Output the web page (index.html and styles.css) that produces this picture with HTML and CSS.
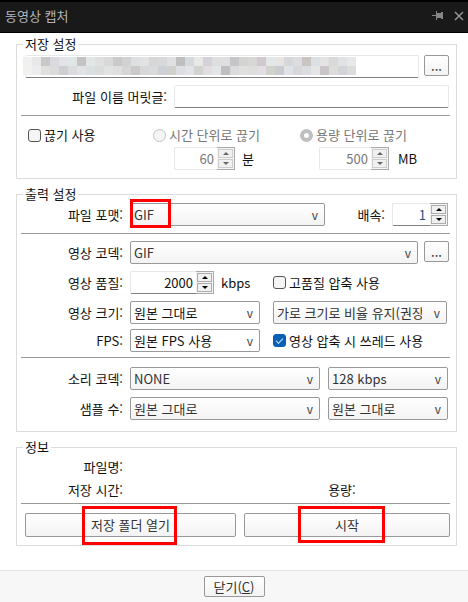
FILE: index.html
```html
<!DOCTYPE html>
<html lang="ko">
<head>
    <meta charset="UTF-8">
    <meta name="viewport" content="width=device-width, initial-scale=1.0">
    <title>동영상 캡처</title>
    <link rel="stylesheet" href="styles.css">
</head>
<body>

    <header class="title-bar">
        <h1>동영상 캡처</h1>
        <button type="button" class="title-button" aria-label="항상 위">
            <svg width="12" height="10" viewBox="0 0 12 10" shape-rendering="crispEdges">
                <path d="M0 4h5v1H0zM4 0h1v9H4zM5 2h5v5H5zM9 1h2v7H9z" fill="#858585"/>
            </svg>
        </button>
        <button type="button" class="title-button" aria-label="닫기">
            <svg width="10" height="10" viewBox="0 0 10 10">
                <path d="M1 1l8 8M9 1l-8 8" stroke="#9a9a9a" stroke-width="1.4" fill="none"/>
            </svg>
        </button>
    </header>

    <main class="content">
        <!-- Save settings -->
        <fieldset class="group group-save">
            <legend>저장 설정</legend>
            <div class="row row-path">
                <div class="path-box">
                    <input type="text" class="text-box" aria-label="저장 폴더">
                    <svg class="mosaic" width="333" height="18" viewBox="0 0 37 2" preserveAspectRatio="none" shape-rendering="crispEdges" aria-hidden="true"></svg>
                </div>
                <button type="button" class="btn btn-more">...</button>
            </div>
            <div class="row row-prefix">
                <label for="prefix">파일 이름 머릿글:</label>
                <input type="text" id="prefix" class="text-box">
            </div>
            <hr class="sep sep-split">
            <div class="split">
                <label class="check"><input type="checkbox">끊기 사용</label>
                <div class="split-option">
                    <label class="check muted"><input type="radio" name="split" disabled>시간 단위로 끊기</label>
                    <div class="amount">
                        <div class="spin spin-off">
                            <input type="number" value="60" aria-label="시간" disabled>
                            <div class="spin-buttons">
                                <button type="button" class="up" aria-label="증가" disabled></button>
                                <button type="button" class="down" aria-label="감소" disabled></button>
                            </div>
                        </div>
                        <span>분</span>
                    </div>
                </div>
                <div class="split-option split-size">
                    <label class="check muted"><input type="radio" name="split" checked disabled>용량 단위로 끊기</label>
                    <div class="amount">
                        <div class="spin spin-off">
                            <input type="number" value="500" aria-label="용량" disabled>
                            <div class="spin-buttons">
                                <button type="button" class="up" aria-label="증가" disabled></button>
                                <button type="button" class="down" aria-label="감소" disabled></button>
                            </div>
                        </div>
                        <span>MB</span>
                    </div>
                </div>
            </div>
        </fieldset>

        <!-- Output settings -->
        <fieldset class="group group-output">
            <legend>출력 설정</legend>
            <div class="row row-format">
                <label for="format">파일 포맷:</label>
                <div class="select marked">
                    <select id="format"><option>GIF</option></select>
                    <span class="mark mark-format"></span>
                </div>
                <label for="speed">배속:</label>
                <div class="spin spin-speed">
                    <input type="number" id="speed" value="1">
                    <div class="spin-buttons">
                        <button type="button" class="up" aria-label="증가"></button>
                        <button type="button" class="down" aria-label="감소"></button>
                    </div>
                </div>
            </div>
            <hr class="sep">
            <div class="row row-codec">
                <label for="codec">영상 코덱:</label>
                <div class="select"><select id="codec"><option>GIF</option></select></div>
                <button type="button" class="btn btn-more">...</button>
            </div>
            <div class="row row-video">
                <label for="quality">영상 품질:</label>
                <div class="amount">
                    <div class="spin">
                        <input type="number" id="quality" value="2000">
                        <div class="spin-buttons">
                            <button type="button" class="up" aria-label="증가"></button>
                            <button type="button" class="down" aria-label="감소"></button>
                        </div>
                    </div>
                    <span>kbps</span>
                </div>
                <label class="check"><input type="checkbox">고품질 압축 사용</label>
            </div>
            <div class="row row-video">
                <label for="size">영상 크기:</label>
                <div class="select select-white"><select id="size"><option>원본 그대로</option></select></div>
                <div class="select"><select aria-label="비율"><option>가로 크기로 비율 유지(권장)</option></select></div>
            </div>
            <div class="row row-video row-tight">
                <label for="fps">FPS:</label>
                <div class="select select-white"><select id="fps"><option>원본 FPS 사용</option></select></div>
                <label class="check"><input type="checkbox" checked>영상 압축 시 쓰레드 사용</label>
            </div>
            <hr class="sep sep-wide">
            <div class="row row-sound">
                <label for="sound">소리 코덱:</label>
                <div class="select"><select id="sound"><option>NONE</option></select></div>
                <div class="select"><select aria-label="소리 비트레이트"><option>128 kbps</option></select></div>
            </div>
            <div class="row row-sound">
                <label for="sample">샘플 수:</label>
                <div class="select"><select id="sample"><option>원본 그대로</option></select></div>
                <div class="select"><select aria-label="채널"><option>원본 그대로</option></select></div>
            </div>
        </fieldset>

        <!-- Info -->
        <fieldset class="group group-info">
            <legend>정보</legend>
            <div class="info"><span>파일명:</span></div>
            <div class="info"><span>저장 시간:</span><span>용량:</span></div>
            <hr class="sep sep-wide">
            <div class="actions">
                <button type="button" class="btn marked">저장 폴더 열기<span class="mark mark-open"></span></button>
                <button type="button" class="btn marked">시작<span class="mark mark-start"></span></button>
            </div>
        </fieldset>
    </main>

    <footer class="bottom-bar">
        <button type="button" class="btn btn-close">닫기(<u>C</u>)</button>
    </footer>

    <script src="mosaic.js"></script>
</body>
</html>
```
FILE: styles.css
```css
:root {
    --title-bg: #191919;
    --line: #dcdcdc;
    --edge: #999;
    --edge-light: #e8e8e8;
    --text: #111;
    --muted: #777;
    --mark: #f00;
}

* {
    box-sizing: border-box;
}

body {
    margin: 0;
    min-height: 100vh;
    display: flex;
    flex-direction: column;
    background: #fff;
    color: var(--text);
    font-family: "Noto Sans CJK KR", sans-serif;
    font-size: 13px;
    line-height: 16px;
}

button,
input,
select {
    margin: 0;
    font: inherit;
    color: inherit;
}

/* --- Title bar --- */
.title-bar {
    display: flex;
    align-items: center;
    gap: 10px;
    height: 33px;
    padding: 0 4px 2px 5px;
    background: var(--title-bg);
    border-top: 2px solid #000;
    border-bottom: 1px solid #000;
}

.title-bar h1 {
    flex: 1;
    margin: 0;
    font-size: 13px;
    font-weight: 400;
    color: #b4b4bc;
}

.title-button {
    display: flex;
    padding: 0;
    border: 0;
    background: none;
}

/* --- Groups --- */
.content {
    display: flex;
    flex-direction: column;
    gap: 7px;
    padding: 3px 11px 24px 16px;
}

.group {
    min-width: 0;
    margin: 0;
    padding: 0 6px 0 4px;
    border: 1px solid var(--line);
}

.group legend {
    margin-left: 2px;
    padding: 0 2px;
}

.group-save {
    padding-top: 3px;
    padding-bottom: 8px;
}

.group-output {
    padding-top: 1px;
    padding-bottom: 11px;
}

.group-info {
    padding-top: 4px;
    padding-bottom: 8px;
}

.sep {
    height: 1px;
    margin: 7px 0;
    border: 0;
    background: var(--edge);
}

.sep-split {
    margin-bottom: 11px;
}

.sep-wide {
    margin: 5px 0 9px;
}

/* --- Rows --- */
.row {
    display: grid;
    align-items: center;
    height: 23px;
}

.row + .row {
    margin-top: 7px;
}

.row + .row-tight {
    margin-top: 5px;
}

.row > label:not(.check) {
    padding-right: 7px;
    text-align: right;
}

.row-path {
    grid-template-columns: 1fr 25px;
    column-gap: 5px;
    padding: 0 1px 0 4px;
}

.row-prefix {
    grid-template-columns: 153px 1fr;
    padding-right: 1px;
}

.row-format {
    grid-template-columns: 109px 195fr 67px 56fr;
    padding-right: 2px;
}

.row-codec {
    grid-template-columns: 109px 1fr 31px;
    padding-right: 1px;
}

.row-codec .btn-more {
    margin-left: 6px;
}

.row-video {
    grid-template-columns: 109px 130fr 187fr;
    padding-right: 3px;
}

.row-video > :last-child {
    margin-left: 13px;
}

.row-sound {
    grid-template-columns: 109px 190fr 128fr;
    padding-right: 2px;
}

.row-sound > :last-child {
    margin-left: 8px;
}

/* --- Text boxes --- */
.text-box {
    display: block;
    width: 100%;
    height: 23px;
    padding: 0 4px;
    background: #fff;
    border: 1px solid var(--edge-light);
    border-bottom-color: #808080;
    border-radius: 2px;
}

.path-box {
    position: relative;
}

.mosaic {
    position: absolute;
    top: 2px;
    left: -2px;
}

/* --- Buttons --- */
.btn {
    height: 24px;
    padding: 0;
    background: linear-gradient(#fff, #f3f3f3);
    border: 1px solid var(--edge);
    border-radius: 2px;
    color: #333;
}

.btn-more {
    align-self: start;
    height: 21px;
}

.btn-close {
    width: 61px;
    height: 21px;
    line-height: 16px;
}

/* --- Drop-downs --- */
.select {
    position: relative;
}

.select::after {
    content: "v";
    position: absolute;
    top: 4px;
    right: 7px;
    color: #444;
    font-size: 12px;
    pointer-events: none;
}

.select select {
    display: block;
    width: 100%;
    height: 23px;
    padding: 0 24px 0 3px;
    appearance: none;
    background: linear-gradient(#fff, #f3f3f3);
    border: 1px solid var(--edge);
    border-radius: 2px;
    color: #333;
}

.select-white select {
    background: #fff;
    color: var(--text);
}

/* --- Number boxes --- */
.spin {
    display: flex;
    height: 23px;
    border: 1px solid var(--edge-light);
    border-right: 0;
    border-bottom-color: #808080;
    border-radius: 2px;
}

.spin input {
    flex: 1;
    width: 0;
    min-width: 0;
    padding: 0 3px 0 0;
    appearance: textfield;
    background: none;
    border: 0;
    text-align: right;
}

.spin input::-webkit-inner-spin-button {
    display: none;
}

.spin-speed input {
    padding-right: 4px;
    color: #24507c;
}

.spin-buttons {
    display: flex;
    flex-direction: column;
    width: 18px;
    margin: -1px 0;
    padding: 1px;
    gap: 1px;
    background: #f4f4f4;
    border: 1px solid #aaa;
    border-left: 0;
}

.spin-buttons button {
    display: flex;
    flex: 1;
    align-items: center;
    justify-content: center;
    padding: 0;
    background: #f0f0f0;
    border: 1px solid #adadad;
}

.spin-buttons button::before {
    content: "";
    border: 3px solid transparent;
}

.spin-buttons .up::before {
    border-top: 0;
    border-bottom-color: #000;
}

.spin-buttons .down::before {
    border-bottom: 0;
    border-top-color: #000;
}

.spin-off {
    border-bottom-color: var(--edge-light);
}

.spin-off input {
    color: var(--muted);
}

.spin-off .spin-buttons button {
    border-color: #ccc;
}

.spin-off .spin-buttons .up::before {
    border-bottom-color: #666;
}

.spin-off .spin-buttons .down::before {
    border-top-color: #666;
}

.amount {
    display: flex;
    align-items: center;
    gap: 7px;
}

.row-video .spin {
    width: 84px;
}

/* --- Check boxes and radios --- */
.check {
    display: flex;
    align-items: center;
    gap: 3px;
    white-space: nowrap;
}

.check input {
    flex: none;
    width: 13px;
    height: 13px;
    appearance: none;
    background: #f5f5f5;
    border: 1px solid #555;
    border-radius: 3px;
}

.check input[type="checkbox"]:checked {
    display: grid;
    place-items: center;
    background: #0560b6;
    border-color: #0560b6;
}

.check input[type="checkbox"]:checked::before {
    content: "";
    width: 6px;
    height: 3px;
    margin-bottom: 2px;
    border: solid #cfe2f4;
    border-width: 0 0 1px 1px;
    transform: rotate(-45deg);
}

.check input[type="radio"] {
    border-color: #c4c4c4;
    border-radius: 50%;
}

.check input[type="radio"]:checked {
    border: 4px solid #bfbfbf;
    background: #fff;
}

.muted {
    color: var(--muted);
}

/* --- Split options --- */
.split {
    display: grid;
    grid-template-columns: 125fr 147fr 150fr;
    align-items: start;
    padding-left: 7px;
}

.split-option {
    display: grid;
    gap: 4px;
}

.split-option .amount {
    padding-left: 21px;
}

.split-option .spin {
    width: 61px;
}

.split-size .amount {
    gap: 9px;
    padding-left: 19px;
}

.split-size .spin {
    width: 70px;
}

/* --- Info --- */
.info {
    display: grid;
    grid-template-columns: 102px 232fr 94fr;
}

.info span {
    text-align: right;
}

.info + .info {
    margin-top: 7px;
}

.actions {
    display: grid;
    grid-template-columns: 211fr 206fr;
    gap: 8px;
    padding-left: 4px;
}

/* --- Red highlight frames --- */
.marked {
    position: relative;
}

.mark {
    position: absolute;
    z-index: 1;
    border: 3px solid var(--mark);
    pointer-events: none;
}

.mark-format {
    top: -4px;
    left: 0;
    width: 41px;
    height: 29px;
}

.mark-open {
    top: -8px;
    left: calc(50% - 49px);
    width: 95px;
    height: 39px;
}

.mark-start {
    top: -8px;
    left: calc(50% - 49px);
    width: 87px;
    height: 37px;
}

/* --- Bottom bar --- */
.bottom-bar {
    display: flex;
    justify-content: center;
    margin-top: auto;
    padding: 5px 0;
    background: #f7f7f7;
    border-top: 1px solid #e2e2e2;
}
```
FILE: mosaic.js
```js
// Two rows of tiles that hide the folder path
const tiles = [
    'f0f0ee e8e8e8 c8c8c8 dcdae0 e2e3e8 e0e5e5 c4c3c5 e2e6e5 dfdfdf d8dada cbcac8 d0d3d2 dde0e2 e0e2e4 d6d6d6 d7d8d9 e0dfe2 c0bfc0 d5d9db e8e8e8 d4d2d8 dedde0 e0dfe0 c5c5c7 d4d5d1 d6d8d6 d0c8cc e2e7e7 e6e5e4 d6d7d9 dbdddf cac5c3 dce0e4 e4e3e4 d9dad8 e1e2e4 e6e8ea',
    'f2f1ef eaecee e0e1de dcdada cdcfd2 dcdcdf e1e2e5 dcdfdf dcdbdc e0e2e3 dfdfe0 d7d6d6 cbcac9 d6d8da dadada cdd0d4 d0d0cd dddde4 e1e3e6 d2d2d0 e3dce2 e4e5e6 bfbfc2 dadbdc e0e0de dedede e2dee1 d0d2cc cacbd0 dfe2e6 d8d8da dadee2 e6e5e6 c9c5c8 dddeda d3d4da dcdcdc'
];

const mosaic = document.querySelector('.mosaic');

tiles.forEach((row, y) => {
    row.split(' ').forEach((color, x) => {
        const tile = document.createElementNS('http://www.w3.org/2000/svg', 'rect');
        tile.setAttribute('x', x);
        tile.setAttribute('y', y);
        tile.setAttribute('width', 1);
        tile.setAttribute('height', 1);
        tile.setAttribute('fill', '#' + color);
        mosaic.appendChild(tile);
    });
});
```
